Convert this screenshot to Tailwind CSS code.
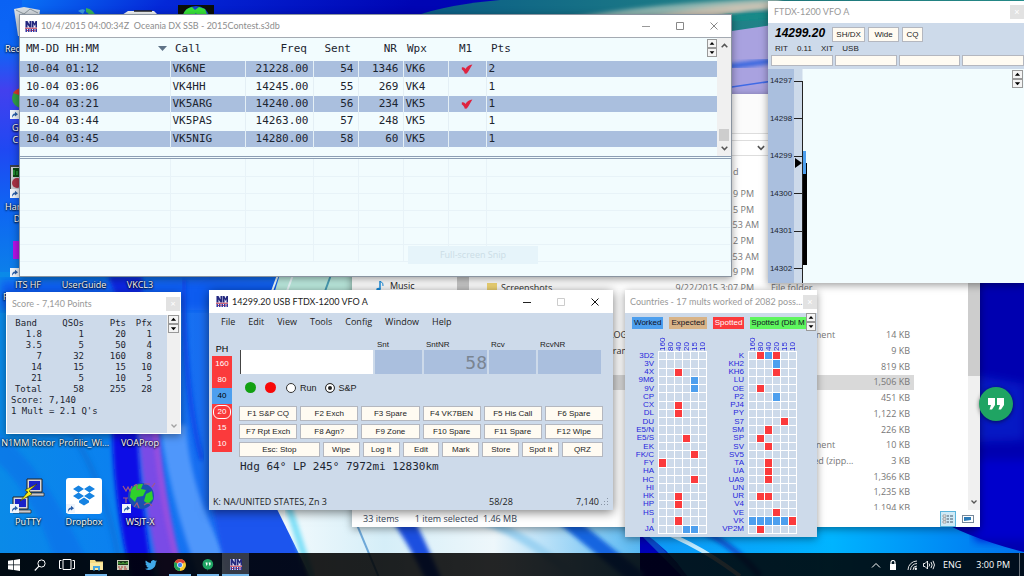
<!DOCTYPE html>
<html lang="en">
<head>
<meta charset="utf-8">
<meta name="viewport" content="width=device-width, initial-scale=1">
<title>N1MM Logger desktop</title>
<script src="https://cdn.jsdelivr.net/npm/@tailwindcss/browser@4"></script>
</head>
<body class="relative h-screen w-full overflow-hidden bg-[#0000b8] font-['Open_Sans',sans-serif] text-[9px] leading-3 text-[#222]">

<svg class="hidden" aria-hidden="true">
  <symbol id="n1mm" viewBox="0 0 24 22">
    <rect width="24" height="22" fill="#eef0fa"/>
    <path d="M1 0h4l4 7V0h4v13H9L5 7v6H1zM14 0h3l2 5 2-5h3v13h-3V6l-1.500 4L17 6v7h-3z" fill="#23277e"/>
    <path d="M0 13.500h24v2H0z" fill="#c23a50"/>
    <path d="M1 16h3v6H1zM6 16h3v6H6zM11 16h3v6h-3zM16 16h3v6h-3zM21 16h3v6h-3z" fill="#3438a0"/>
    <path d="M4 18h2v2H4zM9 18h2v2H9zM14 18h2v2h-2zM19 18h2v2h-2z" fill="#c8334d"/>
  </symbol>
  <symbol id="up" viewBox="0 0 10 8"><path d="M5 2 8 5.500H2z" fill="#000"/></symbol>
  <symbol id="down" viewBox="0 0 10 8"><path d="M5 6 8 2.500H2z" fill="#000"/></symbol>
  <symbol id="shortcut" viewBox="0 0 9 9"><rect width="9" height="9" fill="#eef4fb"/><path d="M2 8C1.800 5 3 3.600 5 3.500V1.800L8 4.200 5 6.600V5.200C3.800 5.200 2.800 6 2 8z" fill="#2a5ea8"/></symbol>
  <symbol id="check" viewBox="0 0 12 10"><path d="M.8 3.600C2.300 2.800 3.600 3.600 4.500 5 6 2.400 8 .8 11.400.4 9.800 2.800 8.200 6.500 5.800 9.600L3.800 9.700C3.200 7.500 1.800 6.200.8 5.600z" fill="#de2440"/></symbol>
  <symbol id="chevdown" viewBox="0 0 8 8"><path d="M1.500 2.500 4 5l2.500-2.500" fill="none" stroke="#555" stroke-width="1.300"/></symbol>
  <symbol id="chevup" viewBox="0 0 8 8"><path d="M1.500 5.500 4 3l2.500 2.500" fill="none" stroke="#555" stroke-width="1.300"/></symbol>
</svg>

<!-- Wallpaper -->
<svg class="absolute inset-0 size-full" viewBox="0 0 1024 576" preserveAspectRatio="none" aria-hidden="true">
  <defs>
    <linearGradient id="w1" x1="0" y1="0" x2="1" y2="0.600"><stop offset="0" stop-color="#0a7cfa"/><stop offset=".12" stop-color="#0428d8"/><stop offset=".3" stop-color="#0005b4"/><stop offset="1" stop-color="#0000b8"/></linearGradient>
    <linearGradient id="w2" x1="0" y1="0" x2="0" y2="1"><stop offset="0" stop-color="#0a62f4"/><stop offset=".16" stop-color="#0c66f6"/><stop offset=".3" stop-color="#4340ee"/><stop offset=".5" stop-color="#1f48f2"/><stop offset=".7" stop-color="#0e66f2"/><stop offset="1" stop-color="#0b8ae6"/></linearGradient>
    <linearGradient id="w3" x1="0" y1="0" x2="1" y2="0"><stop offset="0" stop-color="#0a8ae8"/><stop offset=".4" stop-color="#0b80f0"/><stop offset=".7" stop-color="#1a6cf2"/><stop offset="1" stop-color="#1c82f8"/></linearGradient>
    <linearGradient id="w4" x1="0" y1="0" x2="1" y2="0"><stop offset="0" stop-color="#0a5d86"/><stop offset=".5" stop-color="#1f7f86"/><stop offset="1" stop-color="#2a9a98"/></linearGradient>
    <linearGradient id="w5" x1="0" y1="0" x2="1" y2="0"><stop offset="0" stop-color="#f4fbfd"/><stop offset=".3" stop-color="#d5eef8"/><stop offset=".6" stop-color="#eef7fb"/><stop offset="1" stop-color="#58b8f2"/></linearGradient>
    <linearGradient id="w6" x1="0" y1="0" x2="1" y2="0"><stop offset="0" stop-color="#1098f8"/><stop offset=".5" stop-color="#00b4ff"/><stop offset="1" stop-color="#0070ee"/></linearGradient>
    <filter id="soft"><feGaussianBlur stdDeviation="2"/></filter>
    <filter id="softer"><feGaussianBlur stdDeviation="5"/></filter>
  </defs>
  <rect width="1024" height="576" fill="url(#w1)"/>
  <rect width="22" height="300" fill="url(#w2)"/>
  <path d="M415 16Q450 4 500 0h524v100H415z" fill="url(#w4)"/>
  <path d="M560 20Q660 2 780-2v10Q690 10 640 24z" fill="#8fb5b0" filter="url(#soft)"/>
  <path d="M640 20Q700 4 780 2v6Q720 12 700 24z" fill="#c9c3b4" filter="url(#soft)"/>
  <path d="M725 32 780 24V100H725z" fill="#a9a2e0"/>
  <path d="M725 20 780 14" stroke="#128a88" stroke-width="8" fill="none" filter="url(#soft)"/>
  <path d="M725 67 780 60" stroke="#2b5fe0" stroke-width="5" fill="none" filter="url(#soft)"/>
  <path d="M725 88 780 80" stroke="#3f6ae6" stroke-width="1.500" fill="none"/>
  <rect y="272" width="300" height="304" fill="url(#w3)"/>
  <path d="M0 280h290v30H0z" fill="#0c5cf0" filter="url(#softer)"/>
  <path d="M108 276h34v20h-26z" fill="#0a28e0" filter="url(#soft)"/>
  <path d="M-5 430Q50 470 95 580H60Q40 500-5 460z" fill="#1060e8" opacity=".35" filter="url(#soft)"/>
  <path d="M70 430Q110 490 122 580" stroke="#0a6ad0" stroke-width="6" opacity=".5" fill="none" filter="url(#soft)"/>
  <path d="M160 425Q170 500 200 580h40Q190 500 186 425z" fill="#4f97fb" filter="url(#soft)"/>
  <path d="M112 430Q114 510 132 580h22Q140 500 138 430z" fill="#0707e6" filter="url(#soft)"/>
  <path d="M138 425Q142 500 160 580h24Q164 500 158 425z" fill="#7a4ce6" filter="url(#soft)"/>
  <path d="M155 425Q160 500 182 580" stroke="#a050dc" stroke-width="4" fill="none" filter="url(#soft)"/>
  <path d="M184 280v40q4 90 18 140" stroke="#0b48e8" stroke-width="5" fill="none" filter="url(#soft)"/>
  <path d="M212 505h73l22 75h-80z" fill="#1a55ee" filter="url(#soft)"/>
  <path d="M280 274h80v20h-86z" fill="#bfeee2"/>
  <path d="M279 272 271 294M294 272 286 294" stroke="#effcff" stroke-width="2" fill="none"/>
  <path d="M332 272 324 294" stroke="#4aa0b8" stroke-width="2" fill="none"/>
  <path d="M275 505h365v75H312z" fill="url(#w5)"/>
  <path d="M288 505 312 580" stroke="#7fe0f8" stroke-width="7" fill="none" filter="url(#soft)"/>
  <path d="M355 520 380 580" stroke="#6ea8d8" stroke-width="2" fill="none"/>
  <path d="M388 515Q410 545 428 585l16 0Q425 540 412 515z" fill="#1a50e0" filter="url(#soft)"/>
  <path d="M480 520Q520 530 580 580" stroke="#9bd2f2" stroke-width="9" fill="none" filter="url(#soft)"/>
  <path d="M560 515 640 580" stroke="#1565e0" stroke-width="15" fill="none" filter="url(#soft)"/>
  <path d="M625 515 690 580" stroke="#0a48c8" stroke-width="6" fill="none"/>
  <path d="M640 515h384v65H690Q670 550 640 530z" fill="url(#w6)"/>
  <path d="M640 524Q690 538 740 576" stroke="#bfeaff" stroke-width="4" fill="none"/>
  <path d="M690 526Q730 540 760 576" stroke="#0a55d0" stroke-width="6" fill="none" filter="url(#soft)"/>
  <path d="M930 515Q970 540 1040 556V280H975V515z" fill="#0000b0"/>
  <path d="M975 375 1024 384V440L975 442z" fill="#1030d8" opacity=".5" filter="url(#softer)"/>
  <path d="M975 460h60v80h-60z" fill="#0000cc" filter="url(#softer)"/>
</svg>

<!-- Desktop shortcuts -->
<section class="text-center text-white [text-shadow:0_1px_2px_#000,0_0_2px_#000]" aria-label="Desktop">
  <svg class="absolute left-[12px] top-[6px] h-8 w-8" viewBox="0 0 32 32"><path d="M2 3 12 1l16 3-3 26H6z" fill="#d7dde2"/><path d="m4 4 8 4 6-5 8 4" stroke="#8e989f" fill="none"/></svg>
  <svg class="absolute left-[70px] top-[7px] h-4 w-8" viewBox="0 0 32 16"><path d="M2 12a14 10 0 0 1 24 0z" fill="#e6edf2"/><path d="M16 1a13 13 0 0 1 10 9h-6q-1-4-4-5z" fill="#35b25a"/><path d="M8 4q4-3 7-1l-2 4z" fill="#3d9be0"/></svg>
  <svg class="absolute left-[120px] top-[9px] h-3 w-10" viewBox="0 0 40 12"><path d="M2 6 8 2h26l4 4v6H2z" fill="#f4f6f8"/><path d="M14 2h18" stroke="#222" stroke-width="1.500"/></svg>
  <svg class="absolute left-[178px] top-[5px] h-3 w-9" viewBox="0 0 36 12"><rect width="36" height="12" fill="#0b0f08"/><path d="M4 12Q8 1 18 1t14 11z" fill="#1440d0"/><path d="M5 10Q7 3 14 2l3 3 4-3 6 2 3 8H20l-2-4-4 4z" fill="#38e23a"/></svg>
  <p class="absolute left-[5px] top-[43px]">Rec</p>
  <svg class="absolute left-[11px] top-[88px] h-5 w-5" viewBox="0 0 20 20"><circle cx="11" cy="10" r="10" fill="#2f9e48"/><path d="M2 5Q6 0 11 0v8z" fill="#d8392b"/></svg>
  <svg class="absolute left-[10px] top-[110px] size-[9px]"><use href="#shortcut"/></svg>
  <p class="absolute left-[12px] top-[122px]">G<br>C</p>
  <svg class="absolute left-[10px] top-[165px] h-8 w-6" viewBox="0 0 24 32"><rect width="24" height="32" fill="#3a3f48"/><rect x="1" y="2" width="22" height="30" fill="#c8ccd0"/><rect x="3" y="3" width="20" height="9" fill="#0c4a14"/><path d="M4 5v5M7 6v4" stroke="#39c84c"/><circle cx="7" cy="18" r="5" fill="#a83244"/></svg>
  <svg class="absolute left-[10px] top-[189px] size-[9px]"><use href="#shortcut"/></svg>
  <p class="absolute left-[5px] top-[201px] text-right">Har<br>D</p>
  <div class="absolute left-[13px] top-[241px] h-[18px] w-2 bg-[#b414e6]"></div>
  <svg class="absolute left-[10px] top-[268px] size-[9px]"><use href="#shortcut"/></svg>
  <p class="absolute left-[3px] top-[291px]">F</p>
  <div class="absolute left-0 top-[279px] grid grid-cols-3 whitespace-nowrap">
    <p class="w-14">ITS HF</p><p class="w-14">UserGuide</p><p class="w-14">VKCL3</p>
  </div>
  <div class="absolute left-0 top-[437px] grid grid-cols-3 whitespace-nowrap">
    <p class="w-14">N1MM Rotor</p><p class="w-14">Profilic_Wi...</p><p class="w-14">VOAProp</p>
  </div>
  <div class="absolute left-0 top-[477px] grid grid-cols-3 whitespace-nowrap">
    <div class="flex w-14 flex-col items-center gap-px">
      <svg class="h-[38px] w-9" viewBox="0 0 36 38">
        <path d="M17 2h15v13H17z" fill="#d8d8dc" stroke="#222"/><path d="M19 4h11v9H19z" fill="#1a22c8"/><path d="M16 16h18v3H16z" fill="#c8c8cc" stroke="#222" stroke-width=".7"/>
        <path d="M3 20h15v12H3z" fill="#d8d8dc" stroke="#222"/><path d="M5 22h11v8H5z" fill="#1a22c8"/><path d="M3 33h18v3H3z" fill="#c8c8cc" stroke="#222" stroke-width=".7"/>
        <path d="M27 7 15 13l3 2-8 9 12-7-3-3z" fill="#f6ef1c" stroke="#3a3600" stroke-width=".6"/>
        <use href="#shortcut" x="0" y="27" width="9" height="9"/>
      </svg>
      <p>PuTTY</p>
    </div>
    <div class="flex w-14 flex-col items-center gap-px">
      <svg class="h-[38px] w-9" viewBox="0 0 36 38">
        <rect y="1" width="36" height="36" rx="3" fill="#fff"/>
        <path d="M12.500 8.500 18 12l-5.500 3.500L7 12zM23.500 8.500 29 12l-5.500 3.500L18 12zM12.500 15.500 18 19l-5.500 3.500L7 19zM23.500 15.500 29 19l-5.500 3.500L18 19zM18 20.500l5 3.300v1.700L18 28.500l-5-3v-1.700z" fill="#1683e2"/>
        <use href="#shortcut" x="0" y="27" width="9" height="9"/>
      </svg>
      <p>Dropbox</p>
    </div>
    <div class="flex w-14 flex-col items-center gap-px">
      <svg class="h-[38px] w-9" viewBox="0 0 36 38">
        <circle cx="19" cy="19" r="13" fill="#1b4fb0"/>
        <path d="M9 13q4-7 12-6l-2 5 5 1-3 6-6 1-2 5-5-5zM24 17l6-3 1 8-5 5-4-3z" fill="#2fd12b"/>
        <path d="M1 9 4 14l2-4 2 4 2-5M12 9q4-3 3 1t3 2M22 7h6M1 21h5M4 21v5M30 10l3-4M12 30l3-4 2 5M22 28q5-4 8 1" fill="none" stroke="#a05a80" stroke-width="1.200"/>
        <use href="#shortcut" x="0" y="27" width="9" height="9"/>
      </svg>
      <p>WSJT-X</p>
    </div>
  </div>
</section>

<!-- File Explorer -->
<section class="absolute left-[352px] top-[94px] flex h-[433px] w-[628px] flex-col bg-white text-[#777] shadow-[0_2px_8px_#0006]" aria-label="File Explorer">
  <div class="h-10 border-b border-[#ddd] bg-[#fbfbfb]"></div>
  <div class="mx-2 mt-[6px] flex h-4 items-center border-y border-[#ddd]">
    <svg class="ml-auto mr-[206px] size-[10px]"><use href="#chevdown"/></svg>
  </div>
  <div class="flex min-h-0 flex-1">
    <nav class="flex w-[105px] flex-col justify-end pb-[218px] pl-6">
      <a href="#music" class="flex items-center gap-[6px] text-[#222]">
        <svg class="h-[10px] w-2" viewBox="0 0 8 10"><path d="M4 0v8" stroke="#1a8fe0" stroke-width="1.500"/><path d="M4 0q4 2 3 5" fill="none" stroke="#1a8fe0"/><ellipse cx="2.500" cy="8.300" rx="2.300" ry="1.600" fill="#1a8fe0"/></svg>Music</a>
    </nav>
    <div class="w-3 bg-[#c9c9c9]"></div>
    <div class="flex min-w-0 flex-1 flex-col">
      <p class="h-[30px] pl-[264px] pt-[10px]">d</p>
      <table class="block min-h-0 flex-1 overflow-hidden">
        <tbody id="files" class="grid h-[330px] grid-rows-[repeat(21,minmax(0,1fr))]"></tbody>
      </table>
    </div>
    <div class="flex w-3 flex-col items-center bg-[#f0f0f0] pt-4">
      <div class="h-[204px] w-full bg-[#cdcdcd]"></div>
      <svg class="mb-1 mt-auto size-2"><use href="#chevdown"/></svg>
    </div>
  </div>
  <footer class="flex h-[17px] items-center gap-4 pl-[11px] pr-1 text-[#333f55]">
    <span>33 items</span><span class="whitespace-pre">1 item selected  1.46 MB</span>
    <button class="ml-auto flex h-4 w-4 items-center justify-center border border-[#5ab4dc] bg-[#cfeaf6]" aria-label="Details view"><svg class="size-3" viewBox="0 0 12 12"><path d="M1 2h3v2H1zM1 5h3v2H1zM1 8h3v2H1z" fill="#fff" stroke="#777" stroke-width=".6"/><path d="M5 3h2M8 3h3M5 6h2M8 6h3M5 9h2M8 9h3" stroke="#456"/></svg></button>
    <button class="-ml-3 flex h-4 w-4 items-center justify-center" aria-label="Thumbnail view"><svg class="h-2 w-3" viewBox="0 0 12 8"><rect x=".5" y=".5" width="11" height="7" fill="#fff" stroke="#789"/><path d="M2 2h7v3L2 6z" fill="#2a7ab8"/></svg></button>
  </footer>
</section>

<!-- Log window -->
<section class="absolute left-[19px] top-[14px] flex h-[263px] w-[713px] flex-col border border-[#8a94a0] bg-[#f2fcfe] shadow-[0_2px_8px_#0006]" aria-label="Contest log">
  <header class="flex h-[23px] items-center gap-1 border-b border-[#a4aab2] bg-white pl-[5px] text-[#8d8d8d]">
    <svg class="h-[11px] w-3"><use href="#n1mm"/></svg>
    <h1 class="whitespace-pre font-[Lato,sans-serif]">10/4/2015 04:00:34Z  Oceania DX SSB - 2015Contest.s3db</h1>
    <div class="ml-auto flex gap-[24px] pr-[12px]">
      <button aria-label="Minimize"><svg class="size-[10px]" viewBox="0 0 10 10"><path d="M1 5.500h8" stroke="#999"/></svg></button>
      <button aria-label="Maximize"><svg class="size-[10px]" viewBox="0 0 10 10"><path d="M1.500 1.500h7v7h-7z" fill="none" stroke="#888"/></svg></button>
      <button aria-label="Close"><svg class="size-[10px]" viewBox="0 0 10 10"><path d="m1.500 1.500 7 7m0-7-7 7" stroke="#888"/></svg></button>
    </div>
  </header>
  <div class="flex h-[118px] text-[11px] leading-[17px] text-[#1c2530]">
    <div class="relative min-w-0 flex-1 font-['DejaVu_Sans_Mono',monospace]">
      <table class="h-[110px] w-full table-fixed border-collapse">
        <colgroup><col class="w-[150px]"><col class="w-[75px]"><col class="w-[68px]"><col class="w-[45px]"><col class="w-[45px]"><col class="w-[45px]"><col class="w-[38px]"><col></colgroup>
        <thead><tr class="h-[23px]">
          <th class="pb-[3px] pl-[6px] font-normal"><span class="flex items-center justify-between pr-[3px]">MM-DD HH:MM<svg class="h-[5px] w-[9px]" viewBox="0 0 9 5"><path d="M0 0h9L4.500 5z" fill="#5f7387"/></svg></span></th>
          <th class="pb-[3px] pl-[5px] text-left font-normal">Call</th><th class="pb-[3px] pr-[6px] text-right font-normal">Freq</th><th class="pb-[3px] pr-[7px] text-right font-normal">Sent</th><th class="pb-[3px] pr-[6px] text-right font-normal">NR</th><th class="pb-[3px] pl-1 text-left font-normal">Wpx</th><th class="pb-[3px] pl-[11px] text-left font-normal">M1</th><th class="pb-[3px] pl-[5px] text-left font-normal">Pts</th>
        </tr></thead>
        <tbody id="log"></tbody>
      </table>
      <div class="absolute right-0 top-[1px] flex flex-col">
        <button class="h-[9px] w-[10px] border border-[#999] bg-[#f4f4f4]" aria-label="Larger text"><svg class="size-full"><use href="#up"/></svg></button>
        <button class="h-[9px] w-[10px] border border-[#999] bg-[#f4f4f4]" aria-label="Smaller text"><svg class="size-full"><use href="#down"/></svg></button>
      </div>
    </div>
    <div class="flex w-[14px] flex-col items-center bg-[#f0f0f0] py-[3px]">
      <svg class="size-[9px]"><use href="#chevup"/></svg>
      <div class="mt-auto h-3 w-[10px] bg-[#cdcdcd]"></div>
      <svg class="mt-[3px] size-[9px]"><use href="#chevdown"/></svg>
    </div>
  </div>
  <div class="h-[3px] border-y border-[#8c9eb4]"></div>
  <div class="flex flex-1 flex-col">
    <table class="w-full table-fixed border-collapse" aria-label="Search results">
      <colgroup><col class="w-[150px]"><col class="w-[75px]"><col class="w-[68px]"><col class="w-[45px]"><col class="w-[45px]"><col class="w-[45px]"><col class="w-[38px]"><col></colgroup>
      <tbody id="found"></tbody>
    </table>
  </div>
  <p class="absolute left-[388px] top-[231px] w-[130px] bg-[#e6f4fa] py-[3px] text-center text-[#cbdde6]">Full-screen Snip</p>
</section>

<!-- Band map -->
<section class="absolute left-[768px] right-0 top-[1px] flex h-[282px] flex-col bg-[#cddaea] font-['Liberation_Sans',Arial,sans-serif] text-[8px] leading-[10px] shadow-[0_2px_8px_#0006]" aria-label="Band map">
  <header class="flex h-[22px] items-center justify-between bg-white pl-[6px] text-[9px] text-[#999]">
    <h1 class="font-[Lato,sans-serif]">FTDX-1200 VFO A</h1><button class="h-[14px] w-[14px] bg-[#e2e2e2] text-white" aria-label="Close">×</button>
  </header>
  <div class="flex h-[19px] items-end gap-[3px] pl-[7px]">
    <strong class="mb-[3px] mr-1 text-[12px] italic leading-3 text-black">14299.20</strong>
    <button class="h-[15px] w-[33px] border border-[#b4b7bf] bg-[#fffbf2]">SH/DX</button>
    <button class="h-[15px] w-[31px] border border-[#b4b7bf] bg-[#fffbf2]">Wide</button>
    <button class="h-[15px] w-[21px] border border-[#b4b7bf] bg-[#fffbf2]">CQ</button>
  </div>
  <p class="flex gap-[9px] pl-[7px] pt-[2px]"><span>RIT</span><span>0.11</span><span>XIT</span><span>USB</span></p>
  <div class="mt-px grid h-[11px] grid-cols-4 gap-[2px] pl-[3px]">
    <button class="border border-[#b4b7bf] bg-[#fffbf2]" aria-label="Memory 1"></button><button class="border border-[#b4b7bf] bg-[#fffbf2]" aria-label="Memory 2"></button><button class="border border-[#b4b7bf] bg-[#fffbf2]" aria-label="Memory 3"></button><button class="border border-[#b4b7bf] bg-[#fffbf2]" aria-label="Memory 4"></button>
  </div>
  <div class="mt-[3px] flex min-h-0 flex-1 bg-[#f2fcfe]">
    <div class="flex w-[26px] flex-col justify-between bg-[#aabfde] pb-[9px] pt-[7px] text-center text-[#1c2530]">
      <span>14297</span><span>14298</span><span>14299</span><span>14300</span><span>14301</span><span>14302</span>
    </div>
    <svg class="h-full w-[14px]" viewBox="0 0 14 214">
      <rect width="8.500" height="214" fill="#cddaea"/>
      <path d="M8.500 12v202M0 12.500h8M0 49.500h8M0 87.500h8M0 124.500h8M0 162.500h8M0 199.500h8" stroke="#222" fill="none"/>
      <path d="M9 94h4v102H9z" fill="#000"/><path d="M9 82h3v23H9z" fill="#4d9fee"/><path d="m1 89 7 5-7 5z" fill="#000"/>
    </svg>
    <div class="ml-auto mr-[1px] mt-[1px] flex flex-col">
      <button class="h-[9px] w-[11px] border border-[#999] bg-[#f4f4f4]" aria-label="Zoom in"><svg class="size-full"><use href="#up"/></svg></button>
      <button class="h-[9px] w-[11px] border border-[#999] bg-[#f4f4f4]" aria-label="Zoom out"><svg class="size-full"><use href="#down"/></svg></button>
    </div>
  </div>
</section>

<!-- Score -->
<section class="absolute left-[6px] top-[292px] flex h-[142px] w-[175px] flex-col border border-white bg-[#cddaea] shadow-[0_2px_8px_#0006]" aria-label="Score">
  <header class="flex h-[22px] items-center justify-between bg-white pl-[5px] text-[#999]">
    <h1 class="font-[Lato,sans-serif]">Score - 7,140 Points</h1><button class="h-[14px] w-[14px] bg-[#e2e2e2] text-white" aria-label="Close">×</button>
  </header>
  <div class="flex min-h-0 flex-1">
    <div class="flex-1 pt-[3px] font-['DejaVu_Sans_Mono',monospace] text-[9px] leading-[11px] text-[#1c2530]">
      <table class="table-fixed border-collapse text-right">
        <colgroup><col class="w-[35px]"><col class="w-[42px]"><col class="w-[42px]"><col class="w-[26px]"></colgroup>
        <thead><tr><th class="pr-[5px] font-normal">Band</th><th class="font-normal">QSOs</th><th class="font-normal">Pts</th><th class="font-normal">Pfx</th></tr></thead>
        <tbody>
          <tr><td>1.8</td><td>1</td><td>20</td><td>1</td></tr>
          <tr><td>3.5</td><td>5</td><td>50</td><td>4</td></tr>
          <tr><td>7</td><td>32</td><td>160</td><td>8</td></tr>
          <tr><td>14</td><td>15</td><td>15</td><td>10</td></tr>
          <tr><td>21</td><td>5</td><td>10</td><td>5</td></tr>
          <tr><td>Total</td><td>58</td><td>255</td><td>28</td></tr>
        </tbody>
      </table>
      <p class="pl-1">Score: 7,140</p>
      <p class="pl-1">1 Mult = 2.1 Q's</p>
    </div>
    <div class="flex w-[13px] flex-col items-center bg-[#f0f0f0]">
      <button class="h-[9px] w-[11px] border border-[#999] bg-[#f4f4f4]" aria-label="Larger text"><svg class="size-full"><use href="#up"/></svg></button>
      <button class="h-[9px] w-[11px] border border-[#999] bg-[#f4f4f4]" aria-label="Smaller text"><svg class="size-full"><use href="#down"/></svg></button>
      <svg class="mb-[3px] mt-auto size-2 opacity-50"><use href="#chevdown"/></svg>
    </div>
  </div>
</section>

<!-- Entry window -->
<section class="absolute left-[209px] top-[290px] flex h-[220px] w-[404px] flex-col bg-[#cddaea] shadow-[0_2px_10px_#0008]" aria-label="Entry window">
  <header class="flex h-[23px] items-center gap-1 bg-white pl-[7px] text-[#222]">
    <svg class="h-[11px] w-3"><use href="#n1mm"/></svg>
    <h1 class="font-[Lato,sans-serif]">14299.20 USB FTDX-1200 VFO A</h1>
    <div class="ml-auto flex gap-[24px] pr-[13px]">
      <button aria-label="Minimize"><svg class="size-[10px]" viewBox="0 0 10 10"><path d="M1 5.500h8" stroke="#222"/></svg></button>
      <button aria-label="Maximize" disabled><svg class="size-[10px]" viewBox="0 0 10 10"><path d="M1.500 1.500h7v7h-7z" fill="none" stroke="#ccc"/></svg></button>
      <button aria-label="Close"><svg class="size-[10px]" viewBox="0 0 10 10"><path d="m1.500 1.500 7 7m0-7-7 7" stroke="#111"/></svg></button>
    </div>
  </header>
  <nav class="flex h-[18px] items-center gap-[13px] pl-3">
    <button>File</button><button>Edit</button><button>View</button><button>Tools</button><button>Config</button><button>Window</button><button>Help</button>
  </nav>
  <div class="flex flex-1 gap-2 pl-[3px] pr-[10px] font-['Liberation_Sans',Arial,sans-serif] text-[8px] leading-[10px]">
    <div class="w-5 pt-[13px] text-center text-white">
      <p class="mb-[2px] text-[9px] text-black">PH</p>
      <button class="block h-4 w-full bg-[#fb3a3c]">160</button>
      <button class="block h-4 w-full bg-[#fb3a3c]">80</button>
      <button class="block h-4 w-full bg-[#4d9fee] text-black">40</button>
      <button class="block h-4 w-full bg-[#fb3a3c] p-px"><span class="block rounded-[6px] border border-white leading-3">20</span></button>
      <button class="block h-4 w-full bg-[#fb3a3c]">15</button>
      <button class="block h-4 w-full bg-[#fb3a3c]">10</button>
    </div>
    <div class="flex min-w-0 flex-1 flex-col">
      <div class="mt-[9px] grid grid-cols-[133px_47px_63px_47px_63px] items-end gap-x-[2px]">
        <input class="h-6 border-l border-[#444] bg-white pl-1 text-[18px] outline-none" aria-label="Callsign">
        <label class="flex flex-col"><span class="pl-[2px]">Snt</span><input class="h-6 w-full bg-[#aabfde]"></label>
        <label class="flex flex-col"><span class="pl-[2px]">SntNR</span><input class="h-6 w-full bg-[#aabfde] text-right font-['DejaVu_Sans_Mono',monospace] text-[18px] text-[#7a8592]" value="58"></label>
        <label class="flex flex-col"><span class="pl-[2px]">Rcv</span><input class="h-6 w-full bg-[#aabfde]"></label>
        <label class="flex flex-col"><span class="pl-[2px]">RcvNR</span><input class="h-6 w-full bg-[#aabfde]"></label>
      </div>
      <div class="mt-2 flex items-center pl-[5px] text-[9px]">
        <span class="size-[11px] rounded-full bg-[#12a012]"></span><span class="ml-[9px] size-[11px] rounded-full bg-[#f80808]"></span>
        <label class="ml-[10px] flex items-center gap-1"><input type="radio" name="mode" class="size-[10px] appearance-none rounded-full border border-[#333] bg-white">Run</label>
        <label class="ml-[8px] flex items-center gap-1"><input type="radio" name="mode" checked class="size-[10px] appearance-none rounded-full border border-[#333] bg-[#222] shadow-[inset_0_0_0_2px_#fff]">S&amp;P</label>
      </div>
      <div class="-ml-px mt-[13px] grid grid-cols-6 gap-x-[3px] gap-y-[3px]">
        <button class="h-[15px] border border-[#b4b7bf] bg-[#fffbf2]">F1 S&amp;P CQ</button><button class="h-[15px] border border-[#b4b7bf] bg-[#fffbf2]">F2 Exch</button><button class="h-[15px] border border-[#b4b7bf] bg-[#fffbf2]">F3 Spare</button><button class="h-[15px] border border-[#b4b7bf] bg-[#fffbf2]">F4 VK7BEN</button><button class="h-[15px] border border-[#b4b7bf] bg-[#fffbf2]">F5 His Call</button><button class="h-[15px] border border-[#b4b7bf] bg-[#fffbf2]">F6 Spare</button>
        <button class="h-[15px] border border-[#b4b7bf] bg-[#fffbf2]">F7 Rpt Exch</button><button class="h-[15px] border border-[#b4b7bf] bg-[#fffbf2]">F8 Agn?</button><button class="h-[15px] border border-[#b4b7bf] bg-[#fffbf2]">F9 Zone</button><button class="h-[15px] border border-[#b4b7bf] bg-[#fffbf2]">F10 Spare</button><button class="h-[15px] border border-[#b4b7bf] bg-[#fffbf2]">F11 Spare</button><button class="h-[15px] border border-[#b4b7bf] bg-[#fffbf2]">F12 Wipe</button>
      </div>
      <div class="-ml-px mt-[3px] grid grid-cols-[81fr_37fr_37fr_37fr_37fr_37fr_37fr_41fr] gap-x-[3px]">
        <button class="h-[15px] border border-[#b4b7bf] bg-[#fffbf2]">Esc: Stop</button><button class="h-[15px] border border-[#b4b7bf] bg-[#fffbf2]">Wipe</button><button class="h-[15px] border border-[#b4b7bf] bg-[#fffbf2]">Log It</button><button class="h-[15px] border border-[#b4b7bf] bg-[#fffbf2]">Edit</button><button class="h-[15px] border border-[#b4b7bf] bg-[#fffbf2]">Mark</button><button class="h-[15px] border border-[#b4b7bf] bg-[#fffbf2]">Store</button><button class="h-[15px] border border-[#b4b7bf] bg-[#fffbf2]">Spot It</button><button class="h-[15px] border border-[#b4b7bf] bg-[#fffbf2]">QRZ</button>
      </div>
      <p class="mt-[3px] font-['DejaVu_Sans_Mono',monospace] text-[11px] leading-[14px] text-[#1c2530]">Hdg 64° LP 245° 7972mi 12830km</p>
    </div>
  </div>
  <footer class="flex h-[17px] items-center pl-1 pr-1">
    <span class="w-[276px]">K: NA/UNITED STATES, Zn 3</span><span>58/28</span><span class="ml-auto">7,140</span>
    <svg class="ml-px size-[9px]" viewBox="0 0 9 9"><path d="M7 1h1v1H7zM4 4h1v1H4zM7 4h1v1H7zM1 7h1v1H1zM4 7h1v1H4zM7 7h1v1H7z" fill="#8894a4"/></svg>
  </footer>
</section>

<!-- Countries -->
<section class="absolute left-[625px] top-[290px] flex h-[247px] w-[192px] flex-col bg-[#cddaea] font-['Liberation_Sans',Arial,sans-serif] text-[8px] leading-[8px] shadow-[0_2px_8px_#0006]" aria-label="Countries">
  <header class="flex h-[23px] items-center justify-between bg-white pl-[5px] text-[9px] leading-3 text-[#999]">
    <h1 class="whitespace-nowrap font-[Lato,sans-serif]">Countries - 17 mults worked of 2082 poss...</h1><button class="h-[14px] w-[14px] shrink-0 bg-[#e2e2e2] text-white" aria-label="Close">×</button>
  </header>
  <div class="flex h-[25px] text-[#112]">
    <div class="flex min-w-0 flex-1 gap-[6px] whitespace-nowrap pl-[7px] pt-[4px] leading-3">
      <span class="h-3 bg-[#4d9fee] px-[2px]">Worked</span><span class="h-3 bg-[#d8b387] px-[2px]">Expected</span><span class="h-3 bg-[#fb3a3c] px-[2px] text-white">Spotted</span><span class="h-3 flex-1 bg-[#5ef55e] pl-px">Spotted (Dbl M</span>
    </div>
    <div class="mr-px flex flex-col">
      <button class="h-[9px] w-[10px] border border-[#999] bg-[#f4f4f4]" aria-label="Larger text"><svg class="size-full"><use href="#up"/></svg></button>
      <button class="h-[9px] w-[10px] border border-[#999] bg-[#f4f4f4]" aria-label="Smaller text"><svg class="size-full"><use href="#down"/></svg></button>
    </div>
  </div>
  <div class="grid flex-1 grid-cols-[82px_90px] pb-[3px] text-[#2626dc]">
    <table id="left" class="h-full w-full table-fixed border-collapse"></table>
    <table id="right" class="h-full w-full table-fixed border-collapse"></table>
  </div>
</section>

<!-- Hangouts bubble -->
<button class="absolute right-[11px] top-[387px] flex size-[34px] items-center justify-center rounded-full bg-[#1fa463] shadow-[0_1px_4px_#0008]" aria-label="Hangouts">
  <svg class="h-3 w-4" viewBox="0 0 16 12"><path d="M0 0h7v7l-3 4.500H1.500L3 7H0zM9 0h7v7l-3 4.500h-2.500L12 7H9z" fill="#fff"/></svg>
</button>

<!-- Taskbar -->
<footer class="absolute inset-x-0 bottom-0 flex h-[23px] items-stretch bg-linear-to-r from-black/92 via-black/85 to-black/88 text-white">
  <button class="flex w-7 items-center justify-center" aria-label="Start"><svg class="size-3" viewBox="0 0 12 12"><path d="M0 1.700 5.300 1v4.600H0zM6 .9 12 0v5.600H6zM0 6.300h5.300V11L0 10.300zM6 6.300h6V12l-6-.9z" fill="#fff"/></svg></button>
  <button class="flex w-6 items-center justify-center" aria-label="Search"><svg class="size-3" viewBox="0 0 12 12"><circle cx="7.500" cy="4.500" r="3.600" fill="none" stroke="#fff"/><path d="M5 7.200.8 11.500" stroke="#fff" stroke-width="1.200"/></svg></button>
  <button class="flex w-[30px] items-center justify-center" aria-label="Task view"><svg class="h-[11px] w-4" viewBox="0 0 16 11"><path d="M4 .5h8v10H4zM2.500 1.500h-2v8h2M13.500 1.500h2v8h-2" fill="none" stroke="#fff"/></svg></button>
  <button class="ml-[3px] flex w-[22px] items-center justify-center border-b-2 border-[#76b9ed] pt-[2px]" aria-label="File Explorer"><svg class="h-3 w-[13px]" viewBox="0 0 13 12"><path d="M0 1h5l1 1.500h7V11H0z" fill="#f5dc84"/><path d="M0 4h13v7H0z" fill="#fbe9a0"/><path d="M3 7h7v4.500H8V9H5v2.500H3z" fill="#48a8e0"/></svg></button>
  <button class="ml-1 flex w-6 items-center justify-center" aria-label="Rig control"><svg class="h-[10px] w-3" viewBox="0 0 12 10"><rect width="12" height="10" fill="#c9cdb8"/><path d="M1 1h10v4H1z" fill="#1d3a1a"/><path d="M2 2v2M4 3v1M6 2v2M8 3v1M10 2v2" stroke="#62d848"/><path d="M1 7h2M4 7h2M7 7h2M2 9h3M7 9h3" stroke="#b4453c"/></svg></button>
  <button class="ml-1 flex w-6 items-center justify-center" aria-label="Twitter"><svg class="size-3" viewBox="0 0 24 24"><path d="M23.900 4.600a10 10 0 0 1-2.800.8 5 5 0 0 0 2.200-2.700c-1 .5-2 1-3.100 1.200a4.900 4.900 0 0 0-8.400 4.500A14 14 0 0 1 1.700 3.200a4.900 4.900 0 0 0 1.500 6.500 4.900 4.900 0 0 1-2.200-.6 4.900 4.900 0 0 0 3.900 4.900 5 5 0 0 1-2.200.1 4.900 4.900 0 0 0 4.600 3.400A9.900 9.900 0 0 1 0 19.500 14 14 0 0 0 21.500 7.100a10 10 0 0 0 2.400-2.500z" fill="#41a9ea"/></svg></button>
  <button class="ml-[6px] flex w-[22px] items-center justify-center border-b-2 border-[#76b9ed] pt-[2px]" aria-label="Chrome"><svg class="size-3" viewBox="0 0 12 12"><circle cx="6" cy="6" r="6" fill="#f4c82d"/><path d="M6 6 .8 3A6 6 0 0 1 11.200 3z" fill="#db4437"/><path d="M6 6 .8 3A6 6 0 0 0 6 12z" fill="#1da05a"/><circle cx="6" cy="6" r="2.800" fill="#fff"/><circle cx="6" cy="6" r="2.200" fill="#4285f4"/></svg></button>
  <button class="ml-[6px] flex w-[22px] items-center justify-center border-b-2 border-[#76b9ed] pt-[2px]" aria-label="Hangouts app"><svg class="size-3" viewBox="0 0 12 12"><path d="M6 0a5.200 5.200 0 0 1 0 10.400V12l-.6-1.600A5.200 5.200 0 0 1 6 0z" fill="#1fa463"/><path d="M3.500 3.500h2v2l-1 1.500zM6.600 3.500h2v2l-1 1.500z" fill="#fff"/></svg></button>
  <button class="ml-[3px] flex w-[27px] items-center justify-center border-b-2 border-[#76b9ed] bg-white/20 pt-[2px]" aria-label="N1MM Logger"><svg class="h-[11px] w-3"><use href="#n1mm"/></svg></button>
  <div class="ml-auto flex items-center pr-1">
    <svg class="h-2 w-[10px]" viewBox="0 0 10 8"><path d="m1 6.500 4-4 4 4" fill="none" stroke="#fff"/></svg>
    <svg class="ml-2 h-[10px] w-2" viewBox="0 0 8 10"><path d="M1 4h6v6H1z" fill="#fff"/><path d="M2 4V2.500a2 2 0 0 1 4 0V4" fill="none" stroke="#fff" stroke-width="1.200"/></svg>
    <svg class="ml-[10px] size-[10px]" viewBox="0 0 10 10"><path d="M1 10a9 9 0 0 1 9-9M3.500 10A6.500 6.500 0 0 1 10 3.500M6 10a4 4 0 0 1 4-4" fill="none" stroke="#ddd"/><circle cx="8.800" cy="8.800" r="1.200" fill="#fff"/></svg>
    <svg class="ml-[6px] h-[10px] w-[13px]" viewBox="0 0 13 10"><path d="M.5 3.500H2L4.500 1v8L2 6.500H.5zM6 3.500q1.200 1.500 0 3M8 2q2.200 3 0 6M10 .8q3 4.200 0 8.400" fill="none" stroke="#fff" stroke-width=".9"/></svg>
    <span class="ml-[7px]">ENG</span><time class="ml-[15px]">3:00 PM</time>
    <span class="ml-[9px] h-[23px] w-px bg-white/40"></span>
  </div>
</footer>

<script>
const log = [
  ['10-04 01:12','VK6NE','21228.00','54','1346','VK6',1,'2'],
  ['10-04 03:06','VK4HH','14245.00','55','269','VK4',0,'1'],
  ['10-04 03:21','VK5ARG','14240.00','56','234','VK5',1,'1'],
  ['10-04 03:44','VK5PAS','14263.00','57','248','VK5',0,'1'],
  ['10-04 03:45','VK5NIG','14280.00','58','60','VK5',0,'1']
];
document.getElementById('log').innerHTML = log.map(r => `
  <tr class="border-b border-[#f2fcfe] odd:bg-[#aabfde]">
    <td class="border-r border-[#e4eff5] p-0 pl-[6px] leading-4">${r[0]}</td>
    <td class="border-r border-[#e4eff5] p-0 pl-[2px] leading-4">${r[1]}</td>
    <td class="border-r border-[#e4eff5] p-0 pr-1 text-right leading-4">${r[2]}</td>
    <td class="border-r border-[#e4eff5] p-0 pr-1 text-right leading-4">${r[3]}</td>
    <td class="border-r border-[#e4eff5] p-0 pr-1 text-right leading-4">${r[4]}</td>
    <td class="border-r border-[#e4eff5] p-0 pl-[2px] leading-4">${r[5]}</td>
    <td class="border-r border-[#e4eff5] p-0">${r[6] ? '<svg class="mx-auto h-[10px] w-3" aria-label="yes"><use href="#check"/></svg>' : ''}</td>
    <td class="p-0 pl-[2px] leading-4">${r[7]}</td>
  </tr>`).join('');
document.getElementById('found').innerHTML = Array(6).fill(
  '<tr class="h-[17px] border-b border-[#e8f3f8]">' + '<td class="border-r border-[#e8f3f8] p-0"></td>'.repeat(8) + '</tr>').join('');

const files = [
  ['','9 PM','',''],['','5 PM','',''],['',':53 AM','',''],['','2 PM','',''],['',':53 AM','',''],['','9 PM','',''],
  ['Screenshots','9/22/2015 3:07 PM','File folder',''],['','','',''],['','','',''],
  ['LOG','','Text Document','14 KB'],['ran','','','9 KB'],['','','','819 KB'],['','','','1,506 KB'],['','','','451 KB'],
  ['','','','1,122 KB'],['','','','226 KB'],['','','Text Document','10 KB'],['','','Compressed (zipp...','3 KB'],
  ['','','','1,366 KB'],['','','','1,235 KB'],['','','','1,194 KB']
];
const folder = '<svg class="h-[10px] w-3" viewBox="0 0 12 10"><path d="M1 0h10v9H1z" fill="#f3d877"/><path d="M0 7h5v3H0z" fill="#3a9a4a"/></svg>';
document.getElementById('files').innerHTML = files.map((f, i) => `
  <tr class="mr-[54px] grid grid-cols-[158px_132px_12px_1fr_50px] items-center whitespace-nowrap ${i === 12 ? 'bg-[#d9d9d9]' : ''}">
    <td class="flex items-center gap-[3px] text-[#333] ${f[0].length > 3 ? 'pl-[17px]' : 'justify-end'}">${f[0].length > 3 ? folder : ''}${f[0]}</td>
    <td class="text-right ${f[1].endsWith('AM') ? '' : 'pr-[5px]'}">${f[1]}</td><td></td><td>${f[2]}</td><td class="pr-1 text-right">${f[3]}</td>
  </tr>`).join('');

// b = worked (blue), r = spotted (red)
const left = '3D2 ......|3V ......|4X ..r...|9M6 ....b.|9V ....b.|CP ......|CX ..r...|DL ..r...|DU ......|E5/N ......|E5/S ...r..|EK ......|FK/C ....r.|FY r.....|HA ......|HC ....r.|HI ......|HK ..r...|HP ..r...|HS ......|I ..r...|JA ...bb.';
const right = 'K .rbr..|KH2 ...b..|KH6 ...r..|LU ......|OE .r....|P2 ...b..|PJ4 ......|PY ......|S7 ....r.|SM ..r...|SP .r....|SV ..r...|SV5 ......|TA ..r...|UA ..r...|UA9 ..r...|UN ......|UR .rr...|V4 ......|VE ...r..|VK bbbbbr|VP2M .r....';
const fill = {'.': 'border border-white p-0', b: 'border border-white bg-[#4d9fee] p-0', r: 'border border-white bg-[#fb3a3c] p-0'};
const build = (id, rows) => {
  document.getElementById(id).innerHTML =
    '<thead><tr class="h-[13px]"><th class="p-0"></th>' + ['160','80','40','20','15','10'].map(b =>
      `<th class="w-[8px] p-0 align-bottom font-normal"><span class="block h-[13px] w-[8px] rotate-180 text-left [writing-mode:vertical-rl]">${b}</span></th>`).join('') +
    '</tr></thead><tbody>' + rows.split('|').map(r => {
      const [name, cells] = r.split(' ');
      return `<tr><th class="p-0 pr-1 text-right font-normal">${name}</th>` + [...cells].map(c => `<td class="${fill[c]}"></td>`).join('') + '</tr>';
    }).join('') + '</tbody>';
};
build('left', left);
build('right', right);
</script>
</body>
</html>
